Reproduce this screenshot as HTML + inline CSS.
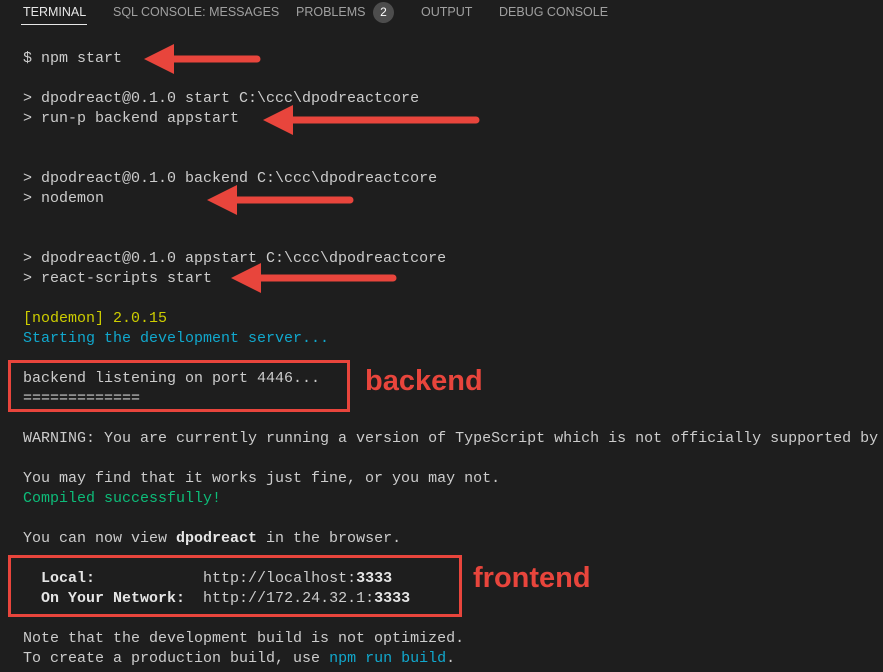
<!DOCTYPE html><html><head><style>
body{margin:0;width:883px;height:672px;background:#1e1e1e;overflow:hidden;position:relative;font-family:"Liberation Mono",monospace;}
.l{position:absolute;left:23px;height:20px;line-height:20px;font-size:15px;color:#cccccc;white-space:pre;margin-top:1px}
.tab{position:absolute;top:5px;font-family:"Liberation Sans",sans-serif;font-size:12.5px;color:#a0a0a0;}
b{color:#e5e5e5}
.y{color:#cdcd00}.c{color:#11a8cd}.g{color:#0dbc79}
.box{position:absolute;border:3px solid #e8453c;}
.lab{position:absolute;font-family:"Liberation Sans",sans-serif;font-weight:bold;font-size:29px;color:#e8453c;}
</style></head><body>
<div class="tab" style="left:23px;color:#e7e7e7">TERMINAL</div>
<div style="position:absolute;left:21px;top:24px;width:66px;height:1px;background:#e7e7e7"></div>
<div class="tab" style="left:113px">SQL CONSOLE: MESSAGES</div>
<div class="tab" style="left:296px">PROBLEMS</div>
<div style="position:absolute;left:373px;top:2px;width:21px;height:21px;border-radius:50%;background:#4d4d4d;color:#fff;font-family:'Liberation Sans',sans-serif;font-size:12px;text-align:center;line-height:21px">2</div>
<div class="tab" style="left:421px">OUTPUT</div>
<div class="tab" style="left:499px">DEBUG CONSOLE</div>

<div class="l" style="top:48px">$ npm start</div>
<div class="l" style="top:88px">&gt; dpodreact@0.1.0 start C:\ccc\dpodreactcore</div>
<div class="l" style="top:108px">&gt; run-p backend appstart</div>
<div class="l" style="top:168px">&gt; dpodreact@0.1.0 backend C:\ccc\dpodreactcore</div>
<div class="l" style="top:188px">&gt; nodemon</div>
<div class="l" style="top:248px">&gt; dpodreact@0.1.0 appstart C:\ccc\dpodreactcore</div>
<div class="l" style="top:268px">&gt; react-scripts start</div>
<div class="l y" style="top:308px">[nodemon] 2.0.15</div>
<div class="l c" style="top:328px">Starting the development server...</div>
<div class="l" style="top:368px">backend listening on port 4446...</div>
<div class="l" style="top:388px">=============</div>
<div class="l" style="top:428px">WARNING: You are currently running a version of TypeScript which is not officially supported by</div>
<div class="l" style="top:468px">You may find that it works just fine, or you may not.</div>
<div class="l g" style="top:488px">Compiled successfully!</div>
<div class="l" style="top:528px">You can now view <b>dpodreact</b> in the browser.</div>
<div class="l" style="top:568px">  <b>Local:</b>            http://localhost:<b>3333</b></div>
<div class="l" style="top:588px">  <b>On Your Network:</b>  http://172.24.32.1:<b>3333</b></div>
<div class="l" style="top:628px">Note that the development build is not optimized.</div>
<div class="l" style="top:648px">To create a production build, use <span class="c">npm run build</span>.</div>

<div class="box" style="left:8px;top:360px;width:336px;height:46px"></div>
<div class="lab" style="left:365px;top:365px">backend</div>
<div class="box" style="left:8px;top:555px;width:448px;height:56px"></div>
<div class="lab" style="left:473px;top:562px">frontend</div>

<svg style="position:absolute;left:0;top:0" width="883" height="672">
<g fill="#e8453c" stroke="#e8453c" stroke-linecap="round" stroke-width="7">
<line x1="170" y1="59" x2="257" y2="59"/><polygon stroke="none" points="144,59 174,44 174,74"/>
<line x1="290" y1="120" x2="476" y2="120"/><polygon stroke="none" points="263,120 293,105 293,135"/>
<line x1="234" y1="200" x2="350" y2="200"/><polygon stroke="none" points="207,200 237,185 237,215"/>
<line x1="258" y1="278" x2="393" y2="278"/><polygon stroke="none" points="231,278 261,263 261,293"/>
</g></svg>
</body></html>
